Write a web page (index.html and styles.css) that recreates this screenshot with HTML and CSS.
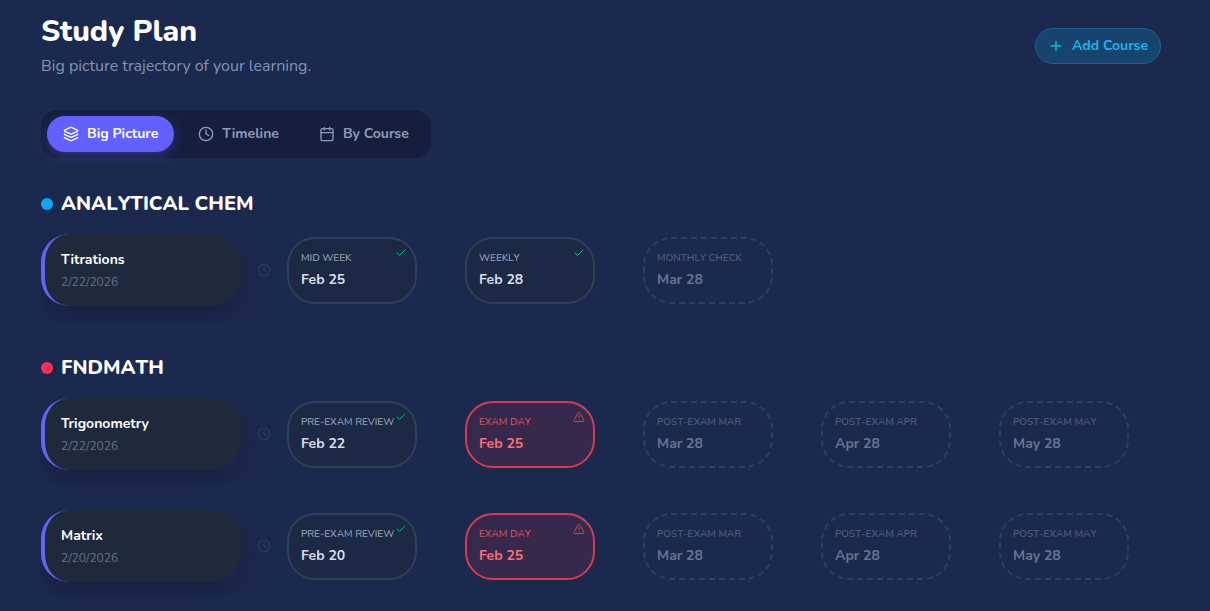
FILE: index.html
```
<!DOCTYPE html>
<html lang="en">

<head>
    <meta charset="UTF-8">
    <meta name="viewport" content="width=device-width, initial-scale=1.0">
    <title>Study Plan</title>
    <link rel="stylesheet" href="styles.css">
</head>

<body>
    <!-- shared icons -->
    <svg class="sprite" aria-hidden="true">
        <symbol id="clock" viewBox="0 0 24 24">
            <circle cx="12" cy="12" r="10" />
            <path d="M12 6v6l4 2" />
        </symbol>
        <symbol id="check" viewBox="0 0 24 24">
            <path d="M20 6 9 17l-5-5" />
        </symbol>
        <symbol id="alert" viewBox="0 0 24 24">
            <path d="m21.73 18-8-14a2 2 0 0 0-3.48 0l-8 14A2 2 0 0 0 4 21h16a2 2 0 0 0 1.73-3" />
            <path d="M12 9v4M12 17h.01" />
        </symbol>
    </svg>

    <main class="container">
        <header class="page-header">
            <div>
                <h1>Study Plan</h1>
                <p class="subtitle">Big picture trajectory of your learning.</p>
            </div>
            <button type="button" class="btn-add">
                <svg class="icon" viewBox="0 0 24 24"><path d="M5 12h14M12 5v14" /></svg>
                Add Course
            </button>
        </header>

        <nav class="tabs">
            <button type="button" class="tab active">
                <svg class="icon" viewBox="0 0 24 24">
                    <path d="M12.83 2.18a2 2 0 0 0-1.66 0L2.6 6.08a1 1 0 0 0 0 1.83l8.58 3.91a2 2 0 0 0 1.66 0l8.58-3.9a1 1 0 0 0 0-1.83z" />
                    <path d="M2 12a1 1 0 0 0 .58.91l8.6 3.91a2 2 0 0 0 1.65 0l8.58-3.9A1 1 0 0 0 22 12" />
                    <path d="M2 17a1 1 0 0 0 .58.91l8.6 3.91a2 2 0 0 0 1.65 0l8.58-3.9A1 1 0 0 0 22 17" />
                </svg>
                Big Picture
            </button>
            <button type="button" class="tab">
                <svg class="icon"><use href="#clock" /></svg>
                Timeline
            </button>
            <button type="button" class="tab">
                <svg class="icon" viewBox="0 0 24 24">
                    <path d="M8 2v4M16 2v4M3 10h18" />
                    <rect x="3" y="4" width="18" height="18" rx="2" />
                </svg>
                By Course
            </button>
        </nav>

        <section class="course">
            <h2><span class="dot dot-blue"></span>ANALYTICAL CHEM</h2>
            <div class="track">
                <div class="topic">
                    <h3>Titrations</h3>
                    <p>2/22/2026</p>
                </div>
                <svg class="start"><use href="#clock" /></svg>
                <div class="node">
                    <span class="label">MID WEEK</span>
                    <span class="date">Feb 25</span>
                    <svg class="mark"><use href="#check" /></svg>
                </div>
                <span class="link"></span>
                <div class="node">
                    <span class="label">WEEKLY</span>
                    <span class="date">Feb 28</span>
                    <svg class="mark"><use href="#check" /></svg>
                </div>
                <span class="link"></span>
                <div class="node future">
                    <span class="label">MONTHLY CHECK</span>
                    <span class="date">Mar 28</span>
                </div>
            </div>
        </section>

        <section class="course">
            <h2><span class="dot dot-red"></span>FNDMATH</h2>
            <div class="track">
                <div class="topic">
                    <h3>Trigonometry</h3>
                    <p>2/22/2026</p>
                </div>
                <svg class="start"><use href="#clock" /></svg>
                <div class="node">
                    <span class="label">PRE-EXAM REVIEW</span>
                    <span class="date">Feb 22</span>
                    <svg class="mark"><use href="#check" /></svg>
                </div>
                <span class="link"></span>
                <div class="node exam">
                    <span class="label">EXAM DAY</span>
                    <span class="date">Feb 25</span>
                    <svg class="mark"><use href="#alert" /></svg>
                </div>
                <span class="link"></span>
                <div class="node future">
                    <span class="label">POST-EXAM MAR</span>
                    <span class="date">Mar 28</span>
                </div>
                <span class="link"></span>
                <div class="node future">
                    <span class="label">POST-EXAM APR</span>
                    <span class="date">Apr 28</span>
                </div>
                <span class="link"></span>
                <div class="node future">
                    <span class="label">POST-EXAM MAY</span>
                    <span class="date">May 28</span>
                </div>
            </div>
            <div class="track">
                <div class="topic">
                    <h3>Matrix</h3>
                    <p>2/20/2026</p>
                </div>
                <svg class="start"><use href="#clock" /></svg>
                <div class="node">
                    <span class="label">PRE-EXAM REVIEW</span>
                    <span class="date">Feb 20</span>
                    <svg class="mark"><use href="#check" /></svg>
                </div>
                <span class="link"></span>
                <div class="node exam">
                    <span class="label">EXAM DAY</span>
                    <span class="date">Feb 25</span>
                    <svg class="mark"><use href="#alert" /></svg>
                </div>
                <span class="link"></span>
                <div class="node future">
                    <span class="label">POST-EXAM MAR</span>
                    <span class="date">Mar 28</span>
                </div>
                <span class="link"></span>
                <div class="node future">
                    <span class="label">POST-EXAM APR</span>
                    <span class="date">Apr 28</span>
                </div>
                <span class="link"></span>
                <div class="node future">
                    <span class="label">POST-EXAM MAY</span>
                    <span class="date">May 28</span>
                </div>
            </div>
        </section>
    </main>
</body>

</html>
```
FILE: styles.css
```
* {
    box-sizing: border-box;
    margin: 0;
    padding: 0;
}

body {
    background-color: #1c294f;
    color: #fff;
    font-family: Nunito, Lato, sans-serif;
    font-size: 14px;
    line-height: 20px;
}

button {
    font: inherit;
    cursor: pointer;
}

svg {
    fill: none;
    stroke: currentColor;
    stroke-width: 2;
    stroke-linecap: round;
    stroke-linejoin: round;
    flex-shrink: 0;
}

.sprite {
    display: none;
}

.icon {
    width: 16px;
    height: 16px;
}

.container {
    padding: 12px 49px 0 41px;
}

/* header */
.page-header {
    display: flex;
    justify-content: space-between;
    align-items: center;
    margin-bottom: 30px;
}

h1 {
    font-size: 30px;
    font-weight: 800;
    line-height: 40px;
}

.subtitle {
    color: #8493b5;
    font-size: 16px;
    line-height: 28px;
}

.btn-add {
    display: flex;
    align-items: center;
    gap: 8px;
    height: 36px;
    padding: 0 12px;
    border: 1px solid #1b6293;
    border-radius: 18px;
    background-color: #17446f;
    color: #22b0f0;
    font-weight: 700;
}

/* view switch */
.tabs {
    display: inline-flex;
    gap: 8px;
    padding: 6px;
    border-radius: 16px;
    background-color: #151f3d;
}

.tab {
    display: flex;
    align-items: center;
    gap: 8px;
    height: 36px;
    padding: 0 16px;
    border: none;
    border-radius: 18px;
    background: transparent;
    color: #8e9cb5;
    font-weight: 700;
}

.tab.active {
    background-color: #6260ff;
    box-shadow: 0 4px 12px rgba(98, 96, 255, 0.3);
    color: #fff;
}

/* courses */
.course {
    margin-top: 30px;
}

h2 {
    display: flex;
    align-items: center;
    gap: 8px;
    margin-bottom: 14px;
    font-size: 20px;
    font-weight: 800;
    font-kerning: none;
    line-height: 32px;
}

.dot {
    width: 12px;
    height: 12px;
    border-radius: 50%;
}

.dot-blue {
    background-color: #0ea5f5;
}

.dot-red {
    background-color: #fb2c56;
}

.track {
    display: flex;
    align-items: center;
    padding-bottom: 16px;
    overflow: hidden;
}

.track + .track {
    margin-top: 24px;
}

.topic {
    flex-shrink: 0;
    width: 200px;
    padding: 16px 16px 14px;
    border-left: 4px solid #6663ee;
    border-radius: 28px;
    background-color: #1e293b;
    box-shadow: 0 10px 30px rgba(15, 23, 42, 0.4);
}

.topic h3 {
    font-size: 14px;
    font-weight: 700;
}

.topic p {
    margin-top: 2px;
    color: #64748b;
    font-size: 12px;
}

.start {
    width: 14px;
    height: 14px;
    margin: 0 16px;
    color: #2f3e5d;
}

.node {
    position: relative;
    display: flex;
    flex-direction: column;
    flex-shrink: 0;
    gap: 3px;
    width: 130px;
    padding: 10px 12px 12px;
    border: 2px solid #303f5b;
    border-radius: 28px;
    background-color: #1c2944;
}

.label {
    color: #94a3b8;
    font-size: 10px;
    font-weight: 500;
    font-kerning: none;
    line-height: 18px;
    white-space: nowrap;
}

.date {
    color: #d5deeb;
    font-weight: 700;
}

.mark {
    position: absolute;
    top: 8px;
    right: 8px;
    width: 12px;
    height: 12px;
    color: #10b981;
}

.exam {
    border-color: #d63c50;
    background-color: #36294b;
}

.exam .label {
    color: #cf5866;
}

.exam .date {
    color: #f8717d;
}

.exam .mark {
    color: #d63c50;
}

.future {
    border-style: dashed;
    border-color: #2f3f60;
    background: transparent;
}

.future .label {
    color: #52617f;
}

.future .date {
    color: #66758f;
}

.link {
    flex-shrink: 0;
    width: 16px;
    height: 2px;
    margin: 0 16px;
    background-color: #1c284a;
}
```
